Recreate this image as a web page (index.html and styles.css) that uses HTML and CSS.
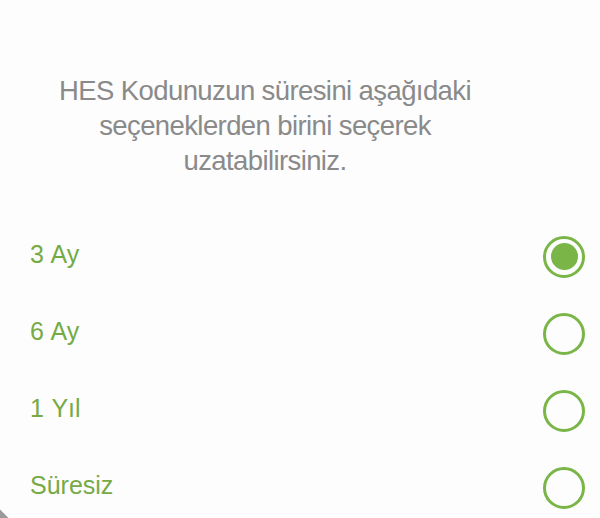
FILE: index.html
```html
<!DOCTYPE html>
<html lang="tr">
<head>
<meta charset="utf-8">
<link rel="stylesheet" href="styles.css">
</head>
<body>
<div class="sheet">
  <p class="intro">HES Kodunuzun süresini aşağıdaki<br>seçeneklerden birini seçerek<br>uzatabilirsiniz.</p>
  <ul class="options">
    <li class="option"><span class="label">3 Ay</span><span class="radio checked"></span></li>
    <li class="option"><span class="label">6 Ay</span><span class="radio"></span></li>
    <li class="option"><span class="label">1 Yıl</span><span class="radio"></span></li>
    <li class="option"><span class="label">Süresiz</span><span class="radio"></span></li>
  </ul>
  <div class="corner"></div>
</div>
</body>
</html>
```
FILE: styles.css
```css
html, body {
  margin: 0;
  padding: 0;
  background: #ffffff;
}
.sheet {
  position: relative;
  width: 600px;
  height: 518px;
  overflow: hidden;
  background: #fdfdfd;
  font-family: "Liberation Sans", Arial, sans-serif;
}
.intro {
  margin: 0;
  padding: 73px 70px 0 0;
  text-align: center;
  font-size: 27.5px;
  letter-spacing: -0.6px;
  line-height: 35px;
  color: #8a8a8a;
}
.options {
  list-style: none;
  margin: 40px 0 0 0;
  padding: 0 15px 0 30px;
}
.option {
  display: flex;
  align-items: center;
  justify-content: space-between;
  height: 77px;
}
.label {
  font-size: 25px;
  color: #76aa45;
  word-spacing: 1px;
  position: relative;
  top: -2px;
}
.radio {
  box-sizing: border-box;
  width: 42px;
  height: 42px;
  border: 3.8px solid #7ab547;
  border-radius: 50%;
  display: flex;
  align-items: center;
  justify-content: center;
}
.radio.checked::after {
  content: "";
  width: 27px;
  height: 27px;
  border-radius: 50%;
  background: #7ab547;
}
.corner {
  position: absolute;
  left: -6px;
  bottom: -6px;
  width: 12px;
  height: 12px;
  background: #9a9a9a;
  transform: rotate(45deg);
}
```
